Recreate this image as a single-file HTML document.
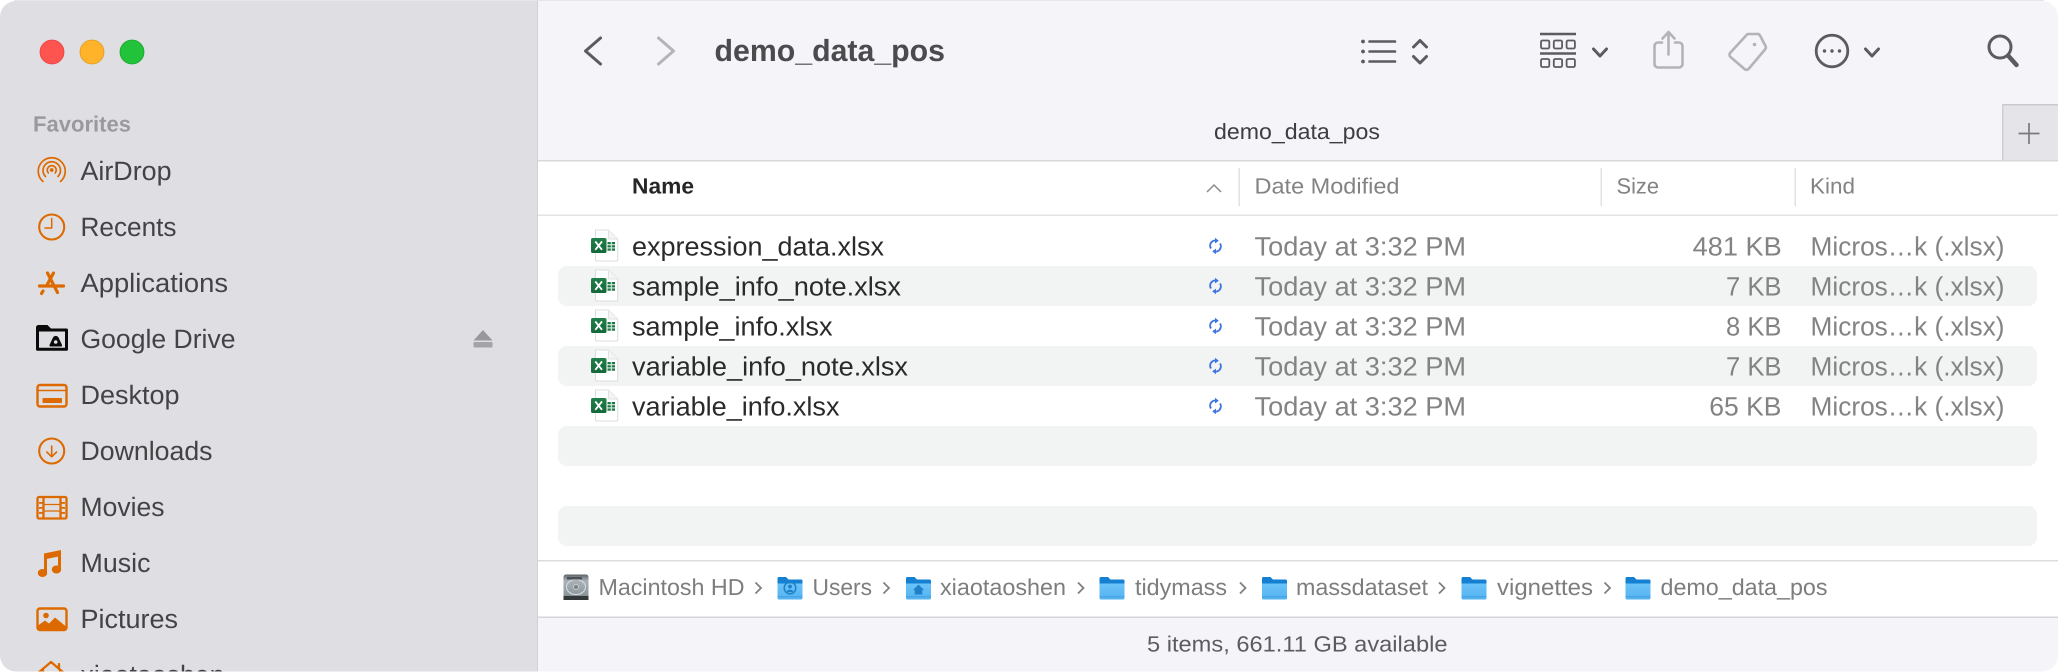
<!DOCTYPE html>
<html><head><meta charset="utf-8"><title>demo_data_pos</title>
<style>
html,body{margin:0;padding:0;background:#fff;width:2058px;height:672px;overflow:hidden}
svg{display:block;font-family:"Liberation Sans",sans-serif}
.s{font-size:26.5px;fill:#434346}
.f{font-size:26.5px;fill:#2a2a2a}
.g{font-size:26.5px;fill:#838383}
.h{font-size:22px;fill:#838383}
.b{font-size:23px;fill:#7d7d7d}
.ic{fill:none;stroke:#dd6a00;stroke-linecap:round;stroke-linejoin:round}
.tb{fill:none;stroke:#5b5b60;stroke-linecap:round;stroke-linejoin:round}
.tl{fill:none;stroke:#b4b4b7;stroke-width:2.6;stroke-linecap:round;stroke-linejoin:round}
</style></head><body>
<svg width="2058" height="672" viewBox="0 0 2058 672" xmlns="http://www.w3.org/2000/svg" text-rendering="geometricPrecision">
<defs>
<clipPath id="w"><rect x="0" y="1" width="2058" height="670.500" rx="16" ry="16"/></clipPath>
<linearGradient id="fb" x1="0" y1="0" x2="0" y2="1"><stop offset="0" stop-color="#6cc4f8"/><stop offset="1" stop-color="#54b2f0"/></linearGradient>
<linearGradient id="xg" x1="0" y1="0" x2="0" y2="1"><stop offset="0" stop-color="#21804a"/><stop offset="1" stop-color="#14683a"/></linearGradient>
<linearGradient id="hd" x1="0" y1="0" x2="0" y2="1"><stop offset="0" stop-color="#5c6468"/><stop offset=".25" stop-color="#a9b2b6"/><stop offset=".8" stop-color="#8e979b"/><stop offset="1" stop-color="#4a4f52"/></linearGradient>
<g id="xl">
<path d="M4.500-16H17.500L26.700-7V13.500A1.500 1.500 0 0 1 25.200 15H6A1.500 1.500 0 0 1 4.500 13.500Z" fill="#fff" stroke="#dcdcdc" stroke-width="1"/>
<path d="M17.500-16V-7H26.700" fill="#f4f4f4" stroke="#e2e2e2" stroke-width="1"/>
<rect x="0" y="-8" width="15.500" height="15" rx="1.800" fill="url(#xg)"/>
<path d="M4.300-4.500L11 3.800M11-4.500L4.300 3.800" stroke="#fff" stroke-width="1.800" fill="none"/>
<g fill="#1d7a45"><rect x="16.500" y="-4" width="3.300" height="2.300"/><rect x="20.700" y="-4" width="3.300" height="2.300"/><rect x="16.500" y="-.8" width="3.300" height="2.300"/><rect x="20.700" y="-.8" width="3.300" height="2.300"/><rect x="16.500" y="2.400" width="3.300" height="2.300"/><rect x="20.700" y="2.400" width="3.300" height="2.300"/></g>
</g>
<g id="sy" fill="none" stroke="#3d74e4" stroke-width="1.900">
<path d="M-4.500 2.500A5.200 5.200 0 0 1 1.500-5.300"/><path d="M4.500-2.500A5.200 5.200 0 0 1-1.500 5.300"/>
<path d="M-.5-8.200L3.300-5.300L-.5-2.600Z" fill="#3d74e4" stroke="none"/><path d="M.5 8.200L-3.300 5.300L.5 2.600Z" fill="#3d74e4" stroke="none"/>
</g>
<g id="fo">
<path d="M0 2.500A1.500 1.500 0 0 1 1.500 1H8.500L11 3.500H23.500A1.500 1.500 0 0 1 25 5V10H0Z" fill="#1580d2"/>
<path d="M0 7.500H25V22A1.500 1.500 0 0 1 23.500 23.500H1.500A1.500 1.500 0 0 1 0 22Z" fill="url(#fb)"/>
<rect x="0" y="20.300" width="25" height="1" fill="#3f9fe0"/>
</g>
</defs>
<rect x="14" y="0" width="2030" height="1" fill="#e6e6e8"/>
<g clip-path="url(#w)">
<rect x="0" y="0" width="2058" height="672" fill="#fff"/>
<!-- sidebar -->
<rect x="0" y="0" width="538" height="672" fill="#dfdfe3"/>
<rect x="537" y="0" width="1" height="672" fill="#d2d2d5"/>
<circle cx="52" cy="52" r="12" fill="#fe5450" stroke="#e2443f" stroke-width=".8"/>
<circle cx="92" cy="52" r="12" fill="#feb32a" stroke="#e09c20" stroke-width=".8"/>
<circle cx="132" cy="52" r="12" fill="#22c23a" stroke="#1aa52e" stroke-width=".8"/>
<text x="33" y="131.500" font-size="22" font-weight="700" fill="#9a9a9e" textLength="98" lengthAdjust="spacingAndGlyphs">Favorites</text>

<text class="s" x="80.500" y="180" textLength="91" lengthAdjust="spacingAndGlyphs">AirDrop</text>
<text class="s" x="80.500" y="236" textLength="96" lengthAdjust="spacingAndGlyphs">Recents</text>
<text class="s" x="80.500" y="292" textLength="147.500" lengthAdjust="spacingAndGlyphs">Applications</text>
<text class="s" x="80.500" y="348" textLength="155" lengthAdjust="spacingAndGlyphs">Google Drive</text>
<text class="s" x="80.500" y="404" textLength="99" lengthAdjust="spacingAndGlyphs">Desktop</text>
<text class="s" x="80.500" y="460" textLength="132" lengthAdjust="spacingAndGlyphs">Downloads</text>
<text class="s" x="80.500" y="516" textLength="84" lengthAdjust="spacingAndGlyphs">Movies</text>
<text class="s" x="80.500" y="572" textLength="70" lengthAdjust="spacingAndGlyphs">Music</text>
<text class="s" x="80.500" y="628" textLength="97.500" lengthAdjust="spacingAndGlyphs">Pictures</text>
<text class="s" x="80.500" y="684" textLength="144" lengthAdjust="spacingAndGlyphs">xiaotaoshen</text>

<!-- airdrop -->
<g class="ic" style="stroke-width:1.700">
<path d="M43 181.500A13.500 13.500 0 1 1 60.500 181.500"/>
<path d="M45.500 176.500A8.700 8.700 0 1 1 58 176.500"/>
<path d="M48.300 173A4.500 4.500 0 1 1 55.200 173"/>
</g>
<circle cx="51.700" cy="170" r="1.900" fill="#dd6a00"/>
<!-- recents -->
<circle cx="51.700" cy="227" r="12.500" class="ic" style="stroke-width:2.100"/><path d="M51.700 218.500V228H45" class="ic" style="stroke-width:1.500"/>
<!-- applications -->
<g class="ic" style="stroke-width:3.200"><path d="M47.500 273L57.500 292.500M53.500 273L47 285M39.500 286H63.500M43 291L41.500 293.500"/></g>
<!-- google drive -->
<path d="M37.500 330H66.500V349.300H37.500Z" fill="none" stroke="#0a0a0a" stroke-width="3" stroke-linejoin="round"/>
<path d="M36 334V327.500A2.500 2.500 0 0 1 38.500 325H47.500L52 329.500H50V331H36Z" fill="#0a0a0a"/>
<path d="M49.500 345L53 337.500A3.200 3.200 0 0 1 58.500 337.500L62 345A1.200 1.200 0 0 1 61 346.500H50.500A1.200 1.200 0 0 1 49.500 345Z" fill="#0a0a0a"/>
<circle cx="55.700" cy="342" r="1.800" fill="#dfdfe3"/>
<!-- eject -->
<path d="M483 330L492.500 340.500H473.500Z" fill="#98989b"/><rect x="473.500" y="342" width="19" height="5.500" rx="1" fill="#a4a4a8"/>
<!-- desktop -->
<rect x="37.500" y="385" width="29" height="21.500" rx="2.500" class="ic" style="stroke-width:2.400"/><path d="M37.500 390.500H66.500" class="ic" style="stroke-width:1.400"/><rect x="42.500" y="398" width="19.500" height="5" rx="1" fill="#dd6a00"/>
<!-- downloads -->
<circle cx="51.700" cy="451" r="12.500" class="ic" style="stroke-width:2.100"/><path d="M51.700 446V456.500M46.800 452L51.700 456.800L56.600 452" class="ic" style="stroke-width:1.600"/>
<!-- movies -->
<g class="ic" style="stroke-width:2.300"><rect x="37.500" y="497" width="29" height="21.500" rx="1.500"/><path d="M43.500 497V518.500M60.500 497V518.500"/></g>
<path d="M44 504.500H60M44 511H60" stroke="#dd6a00" stroke-width="1.200" fill="none"/>
<g fill="#dd6a00"><rect x="39" y="502" width="3.500" height="1.800"/><rect x="39" y="507" width="3.500" height="1.800"/><rect x="39" y="512" width="3.500" height="1.800"/><rect x="61.500" y="502" width="3.500" height="1.800"/><rect x="61.500" y="507" width="3.500" height="1.800"/><rect x="61.500" y="512" width="3.500" height="1.800"/></g>
<!-- music -->
<path d="M45.500 556V573.500" fill="none" stroke="#dd6a00" stroke-width="3"/><path d="M59.500 551V569" fill="none" stroke="#dd6a00" stroke-width="3"/><path d="M44 553.500L61 550V556L44 559.500Z" fill="#dd6a00"/>
<ellipse cx="42.500" cy="573" rx="4.700" ry="4" fill="#dd6a00"/><ellipse cx="56.500" cy="569.500" rx="4.700" ry="4" fill="#dd6a00"/>
<!-- pictures -->
<rect x="37.500" y="608.500" width="29" height="21.500" rx="2.500" class="ic" style="stroke-width:2.400"/><circle cx="46" cy="615.500" r="2.800" fill="#dd6a00"/>
<path d="M38 630V625.500L45 620.500L49 623.500L55 617.500L66 626.500V630Z" fill="#dd6a00"/>
<!-- home -->
<path d="M38 673L51 662L64 673M43 670V680M60 670V680M59 664V669" class="ic" style="stroke-width:2.300"/>

<!-- main -->
<rect x="538" y="0" width="1520" height="160" fill="#f4f4f9"/>
<rect x="538" y="160" width="1520" height="1.500" fill="#d9d9d9"/>
<rect x="538" y="214.500" width="1520" height="1.500" fill="#e3e3e3"/>
<text x="714.500" y="61" font-size="30.500" font-weight="700" fill="#4b4b4e" textLength="230.500" lengthAdjust="spacingAndGlyphs">demo_data_pos</text>
<path d="M600.500 38L585.500 51L600.500 64" fill="none" stroke="#5b5b60" stroke-width="3" stroke-linecap="round" stroke-linejoin="round"/>
<path d="M658.500 38L673.500 51L658.500 64" fill="none" stroke="#b5b5b8" stroke-width="3" stroke-linecap="round" stroke-linejoin="round"/>
<!-- list -->
<g fill="#5b5b60"><circle cx="1363" cy="41.500" r="1.900"/><circle cx="1363" cy="51.500" r="1.900"/><circle cx="1363" cy="61.500" r="1.900"/></g>
<path d="M1369.500 41.500H1395M1369.500 51.500H1395M1369.500 61.500H1395" class="tb" style="stroke-width:2.600"/>
<path d="M1413.500 47L1420 40.500L1426.500 47M1413.500 56.500L1420 63L1426.500 56.500" class="tb" style="stroke-width:3"/>
<!-- group -->
<path d="M1540 34H1576M1540 53.500H1576" style="fill:none;stroke:#5b5b60;stroke-width:2.600"/>
<g fill="none" stroke="#5b5b60" stroke-width="1.800"><rect x="1541" y="40.500" width="8.300" height="8" rx="1.500"/><rect x="1553.800" y="40.500" width="8.300" height="8" rx="1.500"/><rect x="1566.600" y="40.500" width="8.300" height="8" rx="1.500"/><rect x="1541" y="59" width="8.300" height="8" rx="1.500"/><rect x="1553.800" y="59" width="8.300" height="8" rx="1.500"/><rect x="1566.600" y="59" width="8.300" height="8" rx="1.500"/></g>
<path d="M1593.500 49L1600 56L1606.500 49" class="tb" style="stroke-width:3"/>
<!-- share -->
<path d="M1662 42.500H1658A3.500 3.500 0 0 0 1654.500 46V64A3.500 3.500 0 0 0 1658 67.500H1679A3.500 3.500 0 0 0 1682.500 64V46A3.500 3.500 0 0 0 1679 42.500H1675M1668.500 54.500V32.500M1662.500 38.500L1668.500 32L1674.500 38.500" class="tl"/>
<!-- tag -->
<path d="M1747.500 34H1757A3 3 0 0 1 1760 35.500L1765.500 46A3 3 0 0 1 1765 49.500L1749 68.500A3 3 0 0 1 1744.500 69L1730.500 57A3 3 0 0 1 1730.500 52.500Z" class="tl"/>
<circle cx="1754.500" cy="44.500" r="1.800" fill="#b4b4b7"/>
<!-- more -->
<circle cx="1832" cy="51" r="15.800" class="tb" style="stroke-width:2.800"/>
<g fill="#5b5b60"><circle cx="1824.500" cy="51" r="1.700"/><circle cx="1832" cy="51" r="1.700"/><circle cx="1839.500" cy="51" r="1.700"/></g>
<path d="M1865.500 49L1872 56L1878.500 49" class="tb" style="stroke-width:3"/>
<!-- search -->
<circle cx="2000" cy="47" r="11" class="tb" style="stroke-width:3"/><path d="M2008.500 56L2016.500 65" class="tb" style="stroke-width:4.500"/>

<!-- tab -->
<text x="1214" y="139" font-size="22" fill="#3e3e40" textLength="166" lengthAdjust="spacingAndGlyphs">demo_data_pos</text>
<rect x="2002" y="104" width="56" height="56" fill="#e4e4e9"/>
<rect x="2002" y="104" width="56" height="1.500" fill="#c9c9cc"/>
<rect x="2002" y="104" width="1.500" height="56" fill="#cfcfd2"/>
<path d="M2029 123V144M2018.500 133.500H2039.500" stroke="#7a7a7d" stroke-width="1.700" fill="none"/>

<!-- column header -->
<text x="632" y="193.500" font-size="22" font-weight="700" fill="#262626" textLength="62" lengthAdjust="spacingAndGlyphs">Name</text>
<text class="h" x="1254.500" y="193.500" textLength="145" lengthAdjust="spacingAndGlyphs">Date Modified</text>
<text class="h" x="1616.500" y="193.500" textLength="42.500" lengthAdjust="spacingAndGlyphs">Size</text>
<text class="h" x="1810" y="193.500" textLength="45" lengthAdjust="spacingAndGlyphs">Kind</text>
<g fill="#e2e2e2"><rect x="1238.500" y="168" width="1.500" height="38"/><rect x="1600.500" y="168" width="1.500" height="38"/><rect x="1794.500" y="168" width="1.500" height="38"/></g>
<path d="M1207 192L1214 185L1221 192" fill="none" stroke="#8a8a8a" stroke-width="1.500"/>

<!-- stripes -->
<g fill="#f2f3f3"><rect x="558" y="266" width="1479" height="40" rx="9"/><rect x="558" y="346" width="1479" height="40" rx="9"/><rect x="558" y="426" width="1479" height="40" rx="9"/><rect x="558" y="506" width="1479" height="40" rx="9"/></g>

<!-- rows -->
<use href="#xl" x="591" y="246"/><use href="#xl" x="591" y="286"/><use href="#xl" x="591" y="326"/><use href="#xl" x="591" y="366"/><use href="#xl" x="591" y="406"/>
<text class="f" x="632" y="255.500" textLength="252" lengthAdjust="spacingAndGlyphs">expression_data.xlsx</text>
<text class="f" x="632" y="295.500" textLength="269" lengthAdjust="spacingAndGlyphs">sample_info_note.xlsx</text>
<text class="f" x="632" y="335.500" textLength="200.500" lengthAdjust="spacingAndGlyphs">sample_info.xlsx</text>
<text class="f" x="632" y="375.500" textLength="276" lengthAdjust="spacingAndGlyphs">variable_info_note.xlsx</text>
<text class="f" x="632" y="415.500" textLength="207.500" lengthAdjust="spacingAndGlyphs">variable_info.xlsx</text>
<use href="#sy" x="1215.500" y="246"/><use href="#sy" x="1215.500" y="286"/><use href="#sy" x="1215.500" y="326"/><use href="#sy" x="1215.500" y="366"/><use href="#sy" x="1215.500" y="406"/>
<text class="g" x="1254.500" y="255.500" textLength="211.500" lengthAdjust="spacingAndGlyphs">Today at 3:32 PM</text>
<text class="g" x="1254.500" y="295.500" textLength="211.500" lengthAdjust="spacingAndGlyphs">Today at 3:32 PM</text>
<text class="g" x="1254.500" y="335.500" textLength="211.500" lengthAdjust="spacingAndGlyphs">Today at 3:32 PM</text>
<text class="g" x="1254.500" y="375.500" textLength="211.500" lengthAdjust="spacingAndGlyphs">Today at 3:32 PM</text>
<text class="g" x="1254.500" y="415.500" textLength="211.500" lengthAdjust="spacingAndGlyphs">Today at 3:32 PM</text>
<text class="g" x="1692.700" y="255.500" textLength="89" lengthAdjust="spacingAndGlyphs">481 KB</text>
<text class="g" x="1726" y="295.500" textLength="55.500" lengthAdjust="spacingAndGlyphs">7 KB</text>
<text class="g" x="1726" y="335.500" textLength="55.500" lengthAdjust="spacingAndGlyphs">8 KB</text>
<text class="g" x="1726" y="375.500" textLength="55.500" lengthAdjust="spacingAndGlyphs">7 KB</text>
<text class="g" x="1709.300" y="415.500" textLength="72.200" lengthAdjust="spacingAndGlyphs">65 KB</text>
<text class="g" x="1810.500" y="255.500" textLength="194" lengthAdjust="spacingAndGlyphs">Micros…k (.xlsx)</text>
<text class="g" x="1810.500" y="295.500" textLength="194" lengthAdjust="spacingAndGlyphs">Micros…k (.xlsx)</text>
<text class="g" x="1810.500" y="335.500" textLength="194" lengthAdjust="spacingAndGlyphs">Micros…k (.xlsx)</text>
<text class="g" x="1810.500" y="375.500" textLength="194" lengthAdjust="spacingAndGlyphs">Micros…k (.xlsx)</text>
<text class="g" x="1810.500" y="415.500" textLength="194" lengthAdjust="spacingAndGlyphs">Micros…k (.xlsx)</text>

<!-- path bar -->
<rect x="538" y="560" width="1520" height="1.500" fill="#dcdcdc"/>
<!-- hd -->
<rect x="563.500" y="574.500" width="25" height="25.500" rx="2.500" fill="url(#hd)"/>
<rect x="563.500" y="596" width="25" height="4" fill="#33383b"/>
<ellipse cx="576" cy="587" rx="9.500" ry="7.500" fill="none" stroke="#d8dee0" stroke-width="1"/><circle cx="576" cy="587" r="2.500" fill="#7b8488" stroke="#d8dee0" stroke-width=".7"/>
<rect x="567" y="577" width="15" height="2.500" fill="#4b5154"/>
<text class="b" x="598.500" y="595" textLength="146" lengthAdjust="spacingAndGlyphs">Macintosh HD</text>
<g fill="none" stroke="#808080" stroke-width="1.800"><path d="M755.500 582.500L761 588L755.500 593.500"/><path d="M883.500 582.500L889 588L883.500 593.500"/><path d="M1078 582.500L1083.500 588L1078 593.500"/><path d="M1240 582.500L1245.500 588L1240 593.500"/><path d="M1439 582.500L1444.500 588L1439 593.500"/><path d="M1604.500 582.500L1610 588L1604.500 593.500"/></g>
<use href="#fo" x="777.500" y="576"/>
<circle cx="790" cy="588" r="5.800" fill="none" stroke="#1d80c8" stroke-width="1.500"/><circle cx="790" cy="586.500" r="1.900" fill="#1d80c8"/><path d="M786.500 592A3.800 3.800 0 0 1 793.500 592Z" fill="#1d80c8"/>
<text class="b" x="812.500" y="595" textLength="59.500" lengthAdjust="spacingAndGlyphs">Users</text>
<use href="#fo" x="906" y="576"/>
<path d="M913 590L918.500 584.500L924 590H922.300V594.500H914.700V590Z" fill="#1d80c8"/>
<text class="b" x="940" y="595" textLength="126" lengthAdjust="spacingAndGlyphs">xiaotaoshen</text>
<use href="#fo" x="1099.500" y="576"/>
<text class="b" x="1135" y="595" textLength="92" lengthAdjust="spacingAndGlyphs">tidymass</text>
<use href="#fo" x="1262" y="576"/>
<text class="b" x="1296" y="595" textLength="132" lengthAdjust="spacingAndGlyphs">massdataset</text>
<use href="#fo" x="1461.500" y="576"/>
<text class="b" x="1497" y="595" textLength="96" lengthAdjust="spacingAndGlyphs">vignettes</text>
<use href="#fo" x="1625.500" y="576"/>
<text class="b" x="1660.500" y="595" textLength="167" lengthAdjust="spacingAndGlyphs">demo_data_pos</text>

<!-- status -->
<rect x="538" y="616.500" width="1520" height="56" fill="#f4f4f9"/>
<rect x="538" y="616.500" width="1520" height="1.500" fill="#d6d6d8"/>
<text x="1147" y="651.500" font-size="22" fill="#5c5c60" textLength="300.500" lengthAdjust="spacingAndGlyphs">5 items, 661.11 GB available</text>
</g>
</svg>
</body></html>
